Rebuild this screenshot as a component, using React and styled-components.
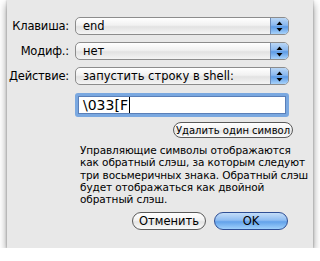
import React from 'react';
import styled, { createGlobalStyle } from 'styled-components';

const GlobalStyle = createGlobalStyle`
  html, body {
    margin: 0;
    padding: 0;
    background: #ffffff;
  }
  body {
    font-family: 'DejaVu Sans', 'Liberation Sans', sans-serif;
    color: #000;
  }
`;

const Sheet = styled.div`
  margin-left: 7px;
  width: 306px;
  height: 248px;
  box-sizing: border-box;
  background: #e8e8e8;
  box-shadow: 0 4px 8px rgba(0, 0, 0, 0.45), 0 0 2px rgba(0, 0, 0, 0.3);
  padding: 17px 0 0 0;
  display: flex;
  flex-direction: column;
`;

const Form = styled.div`
  display: grid;
  grid-template-columns: 62px 214px;
  column-gap: 6px;
  row-gap: 7px;
  align-items: center;
`;

const Label = styled.div`
  font-size: 11.5px;
  text-align: right;
  white-space: nowrap;
  letter-spacing: -0.2px;
`;

const Popup = styled.div`
  position: relative;
  height: 18px;
  box-sizing: border-box;
  border: 1px solid #8c8c8c;
  border-radius: 5px;
  background: linear-gradient(#ffffff 0%, #f1f1f1 45%, #e2e2e2 55%, #f4f4f4 100%);
  display: flex;
  align-items: center;
  padding-left: 7px;
  font-size: 11.5px;
  overflow: hidden;
`;

const Arrows = styled.div`
  position: absolute;
  right: 0;
  top: 0;
  bottom: 0;
  width: 17px;
  border-left: 1px solid #6a8ab8;
  background: linear-gradient(#b9d6f5 0%, #8ab8ef 45%, #5c9be6 55%, #a8d2fa 100%);
  display: flex;
  align-items: center;
  justify-content: center;
`;

const TextField = styled.div`
  grid-column: 2;
  height: 24px;
  box-sizing: border-box;
  border: 3px solid #7aa8e0;
  border-radius: 3px;
  box-shadow: inset 0 0 0 1px #5a7fb8;
  background: #fff;
  display: flex;
  align-items: center;
  padding-left: 5px;
  font-size: 14px;
  margin-top: 1px;
`;

const Caret = styled.span`
  display: inline-block;
  width: 1px;
  height: 16px;
  background: #000;
  margin-left: 1px;
`;

const ButtonRow = styled.div`
  display: flex;
  justify-content: flex-end;
  gap: 8px;
  padding-right: ${(p) => p.$right}px;
  margin-top: ${(p) => p.$top}px;
`;

const Pill = styled.button`
  font-family: inherit;
  color: #000;
  height: ${(p) => (p.$small ? 16 : 18)}px;
  width: ${(p) => p.$width}px;
  padding: 0;
  border-radius: 9px;
  font-size: ${(p) => (p.$small ? 10 : 11.5)}px;
  border: 1px solid ${(p) => (p.$primary ? '#2f4f95' : '#5a5a5a')};
  background: ${(p) =>
    p.$primary
      ? 'linear-gradient(#c4ddf8 0%, #8fbdf2 45%, #63a2ea 55%, #9fd0fb 100%)'
      : 'linear-gradient(#ffffff 0%, #f3f3f3 45%, #e4e4e4 55%, #fafafa 100%)'};
  display: flex;
  align-items: center;
  justify-content: center;
`;

const Note = styled.p`
  margin: 6px 0 0 73px;
  font-size: 10.5px;
  line-height: 12.3px;
  white-space: nowrap;
  letter-spacing: -0.1px;
`;

const ArrowIcon = () => (
  <svg width="7" height="11" viewBox="0 0 7 11">
    <path d="M3.5 0.5 L6.5 4 L0.5 4 Z" fill="#000" />
    <path d="M3.5 10.5 L6.5 7 L0.5 7 Z" fill="#000" />
  </svg>
);

const Select = ({ value }) => (
  <Popup>
    {value}
    <Arrows>
      <ArrowIcon />
    </Arrows>
  </Popup>
);

export default function App() {
  return (
    <>
      <GlobalStyle />
      <Sheet>
        <Form>
          <Label>Клавиша:</Label>
          <Select value="end" />
          <Label>Модиф.:</Label>
          <Select value="нет" />
          <Label>Действие:</Label>
          <Select value="запустить строку в shell:" />
          <TextField>
            \033[F<Caret />
          </TextField>
        </Form>
        <ButtonRow $right={20} $top={5}>
          <Pill $small $width={120}>Удалить один символ</Pill>
        </ButtonRow>
        <Note>
          Управляющие символы отображаются
          <br />
          как обратный слэш, за которым следуют
          <br />
          три восьмеричных знака. Обратный слэш
          <br />
          будет отображаться как двойной
          <br />
          обратный слэш.
        </Note>
        <ButtonRow $right={25} $top={7}>
          <Pill $width={74}>Отменить</Pill>
          <Pill $primary $width={74}>OK</Pill>
        </ButtonRow>
      </Sheet>
    </>
  );
}
